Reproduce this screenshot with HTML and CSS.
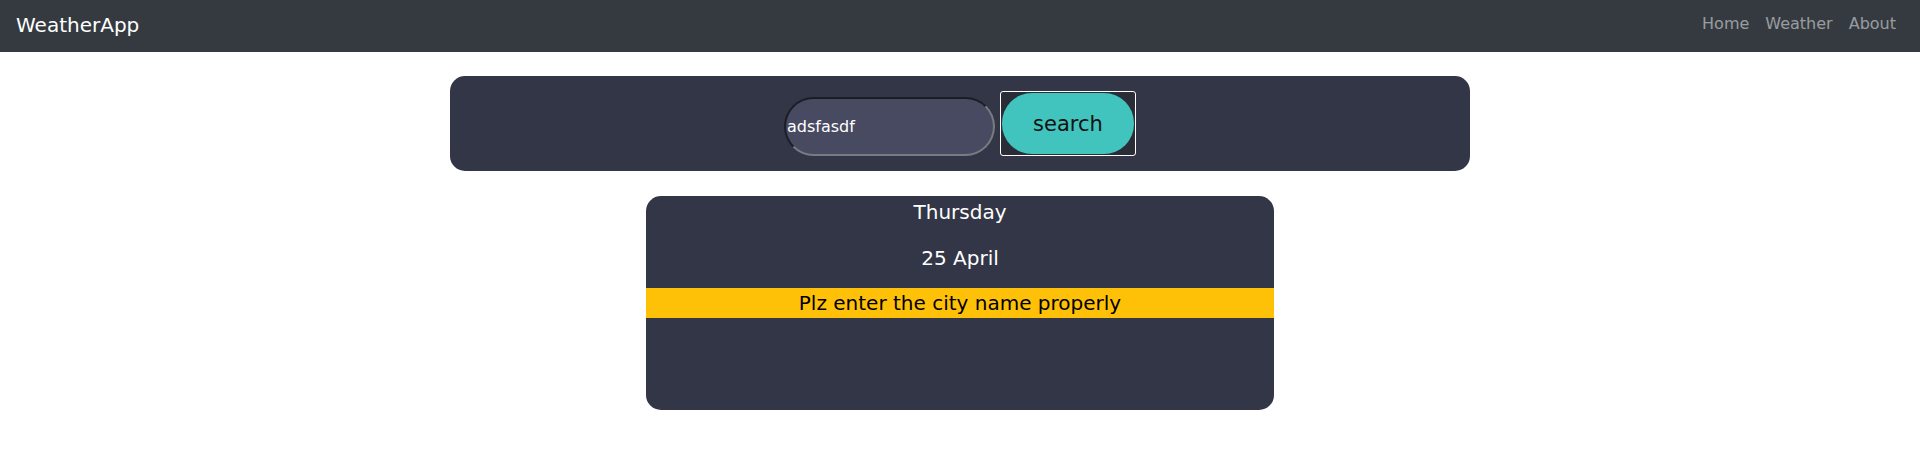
FILE: index.html
```html
<!DOCTYPE html>
<html lang="en">
<head>
<meta charset="utf-8">
<title>WeatherApp</title>
<link rel="stylesheet" href="styles.css">
</head>
<body>
<nav class="navbar">
  <a class="brand" href="#">WeatherApp</a>
  <ul class="nav-links">
    <li><a href="#">Home</a></li>
    <li><a href="#">Weather</a></li>
    <li><a href="#">About</a></li>
  </ul>
</nav>
<main class="main">
  <form class="search-card">
    <input class="city-input" type="text" value="adsfasdf">
    <button class="search-btn" type="button"><span class="search-pill">search</span></button>
  </form>
  <section class="weather-card">
    <p class="day">Thursday</p>
    <p class="date">25 April</p>
    <p class="alert">Plz enter the city name properly</p>
    <div class="weather-body"></div>
  </section>
</main>
</body>
</html>
```
FILE: styles.css
```css
* { box-sizing: border-box; }
html, body { margin: 0; padding: 0; }
body {
  font-family: "DejaVu Sans", Verdana, sans-serif;
  background: #ffffff;
  color: #212529;
  line-height: 1.5;
}
.navbar {
  height: 52px;
  background: #343a40;
  display: flex;
  align-items: center;
  justify-content: space-between;
  padding: 0 16px;
}
.brand {
  color: #ffffff;
  font-size: 20px;
  text-decoration: none;
  line-height: 30px;
  margin-top: -2px;
}
.nav-links {
  list-style: none;
  margin: 0;
  padding: 0;
  display: flex;
}
.nav-links a {
  display: block;
  padding: 0 8px;
  color: rgba(255, 255, 255, 0.5);
  text-decoration: none;
  font-size: 16px;
  line-height: 24px;
  margin-top: -4px;
}
.main {
  display: flex;
  flex-direction: column;
  align-items: center;
  padding-top: 24px;
}
.search-card {
  width: 1020px;
  height: 95px;
  margin: 0;
  background: #333646;
  border-radius: 15px;
  display: flex;
  justify-content: center;
  align-items: center;
  gap: 5px;
}
.city-input {
  width: 211px;
  height: 59px;
  margin-top: 6px;
  border-radius: 30px;
  border-style: solid;
  border-width: 2px;
  border-color: #1c1d24 #7a7b82 #7a7b82 #1c1d24;
  background: #474a61;
  color: #ffffff;
  font-family: "DejaVu Sans", Verdana, sans-serif;
  font-size: 16px;
  padding: 0 1px;
  outline: none;
}
.search-btn {
  width: 136px;
  height: 65px;
  padding: 1px;
  border: 1px solid #ffffff;
  border-radius: 3px;
  background: #2a2c38;
  cursor: pointer;
  display: flex;
}
.search-pill {
  flex: 1;
  display: flex;
  align-items: center;
  justify-content: center;
  background: #40c4bd;
  border-radius: 30px;
  color: #111111;
  font-family: "DejaVu Sans", Verdana, sans-serif;
  font-size: 21px;
}
.weather-card {
  width: 628px;
  height: 214px;
  margin-top: 25px;
  background: #333646;
  border-radius: 15px;
  overflow: hidden;
  color: #ffffff;
  text-align: center;
  font-size: 20px;
  padding-top: 1px;
}
.day { margin: 0 0 16px; line-height: 30px; }
.date { margin: 0 0 15px; line-height: 30px; }
.alert {
  margin: 0;
  height: 30px;
  line-height: 30px;
  background: #ffc107;
  color: #000000;
}
.weather-body { height: 92px; }
```
